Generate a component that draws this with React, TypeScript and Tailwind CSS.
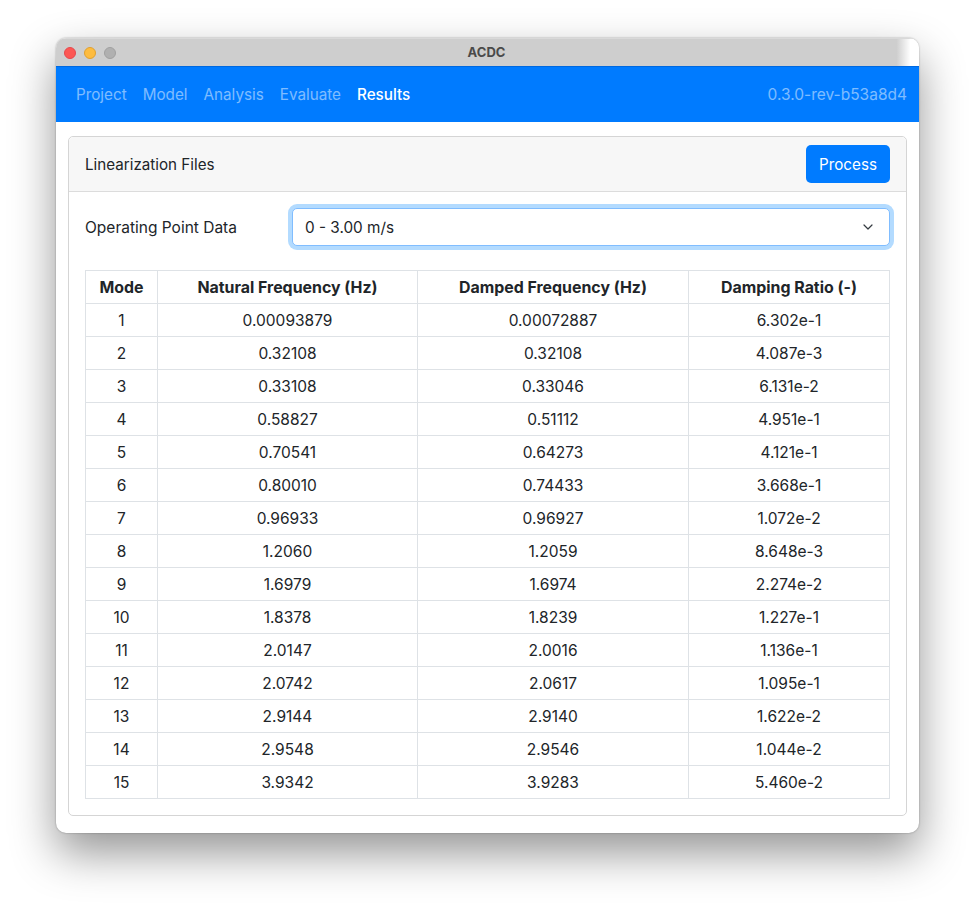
import React from 'react';
import { ChevronDown } from 'lucide-react';

const navItems = ['Project', 'Model', 'Analysis', 'Evaluate', 'Results'];

const modes = [
  ['1', '0.00093879', '0.00072887', '6.302e-1'],
  ['2', '0.32108', '0.32108', '4.087e-3'],
  ['3', '0.33108', '0.33046', '6.131e-2'],
  ['4', '0.58827', '0.51112', '4.951e-1'],
  ['5', '0.70541', '0.64273', '4.121e-1'],
  ['6', '0.80010', '0.74433', '3.668e-1'],
  ['7', '0.96933', '0.96927', '1.072e-2'],
  ['8', '1.2060', '1.2059', '8.648e-3'],
  ['9', '1.6979', '1.6974', '2.274e-2'],
  ['10', '1.8378', '1.8239', '1.227e-1'],
  ['11', '2.0147', '2.0016', '1.136e-1'],
  ['12', '2.0742', '2.0617', '1.095e-1'],
  ['13', '2.9144', '2.9140', '1.622e-2'],
  ['14', '2.9548', '2.9546', '1.044e-2'],
  ['15', '3.9342', '3.9283', '5.460e-2'],
];

const headers = ['Mode', 'Natural Frequency (Hz)', 'Damped Frequency (Hz)', 'Damping Ratio (-)'];

export default function App() {
  return (
    <div className="min-h-[907px] bg-white pt-[38px] pl-[56px] font-['Inter',sans-serif] text-[15.2px] text-[#212529]">
      <div className="flex h-[795px] w-[863px] flex-col overflow-hidden rounded-[10px] bg-white shadow-[0_20px_45px_rgba(0,0,0,0.42),0_0_2px_rgba(0,0,0,0.35)]">
        {/* Title bar */}
        <div className="flex h-[28px] shrink-0 items-center border-t border-[#d9d9d9] bg-[linear-gradient(to_right,#cecece_97.4%,#ffffff_99%)] pl-[8px]">
          <div className="flex gap-[8px]">
            <span className="h-[12px] w-[12px] rounded-full border border-[#e5484d] bg-[#fc5753]" />
            <span className="h-[12px] w-[12px] rounded-full border border-[#e0a030] bg-[#fdbc40]" />
            <span className="h-[12px] w-[12px] rounded-full border border-[#a0a0a0] bg-[#b0b0b0]" />
          </div>
          <div className="flex-1 pr-[62px] text-center text-[13px] leading-none font-bold text-[#4a4a4a]">ACDC</div>
        </div>

        {/* Nav */}
        <nav className="flex h-[56px] shrink-0 items-center justify-between border-t border-[#0069e0] bg-[#007bff] pt-[1px] pr-[12px] pl-[20px] text-[15.25px]">
          <div className="flex gap-[16px]">
            {navItems.map((item) => (
              <span key={item} className={item === 'Results' ? 'font-medium text-white' : 'text-white/50'}>
                {item}
              </span>
            ))}
          </div>
          <span className="text-[15.5px] text-white/50">0.3.0-rev-b53a8d4</span>
        </nav>

        <div className="px-[12px] pt-[14px]">
          <div className="h-[680px] rounded-[5px] border border-[#d5d5d5]">
            {/* Card header */}
            <div className="flex h-[55px] items-center justify-between rounded-t-[5px] border-b border-[#dcdcdc] bg-[#f7f7f7] px-[16px]">
              <span className="pt-[2px]">Linearization Files</span>
              <button className="h-[38px] w-[84px] rounded-[5px] bg-[#007bff] pt-[2px] text-white">Process</button>
            </div>

            <div className="px-[16px] pt-[16px]">
              <div className="flex items-center">
                <label className="w-[207px] shrink-0 pt-[1px] text-[15.5px]">Operating Point Data</label>
                <div className="flex h-[38px] flex-1 items-center justify-between rounded-[5px] border border-[#80bdff] bg-white pr-[13px] pl-[12px] shadow-[0_0_0_4px_#b3dbff]">
                  <span className="pt-[2px] text-[15.3px]">0 - 3.00 m/s</span>
                  <ChevronDown size={16} strokeWidth={1.8} className="text-[#343a40]" />
                </div>
              </div>

              <table className="mt-[24px] w-[804px] table-fixed border-collapse text-center">
                <colgroup>
                  <col className="w-[72px]" />
                  <col className="w-[260px]" />
                  <col className="w-[271px]" />
                  <col className="w-[201px]" />
                </colgroup>
                <thead>
                  <tr className="h-[33px]">
                    {headers.map((h) => (
                      <th key={h} className="border border-[#dee2e6] p-0 pt-[1px] text-[15.9px] font-bold">
                        {h}
                      </th>
                    ))}
                  </tr>
                </thead>
                <tbody>
                  {modes.map((row) => (
                    <tr key={row[0]} className="h-[33px]">
                      {row.map((cell, i) => (
                        <td key={i} className="border border-[#dee2e6] p-0 pt-[1px] text-[15.5px]">
                          {cell}
                        </td>
                      ))}
                    </tr>
                  ))}
                </tbody>
              </table>
            </div>
          </div>
        </div>
      </div>
    </div>
  );
}
